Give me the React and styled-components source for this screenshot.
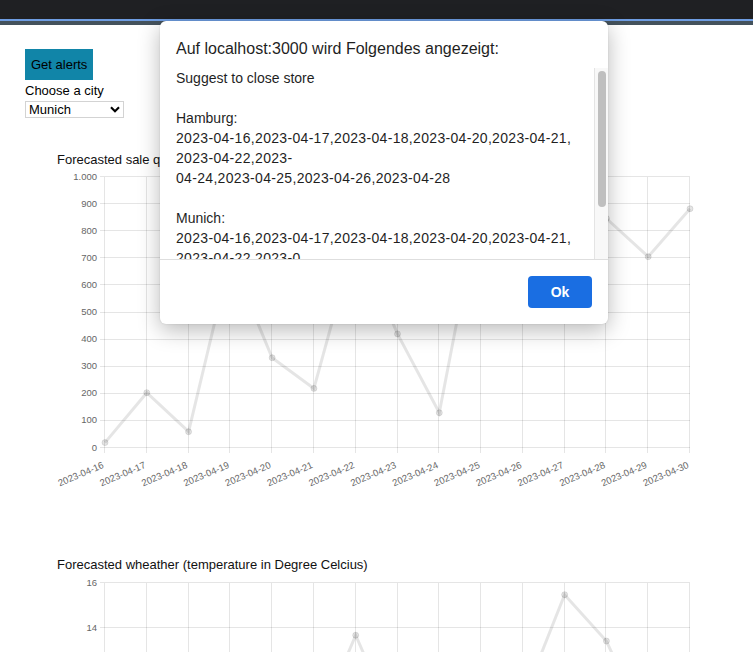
import React from "react";
import styled, { createGlobalStyle } from "styled-components";

const Global = createGlobalStyle`
  html, body {
    margin: 0;
    padding: 0;
    background: #ffffff;
    overflow: hidden;
  }
  body {
    font-family: "Liberation Sans", Arial, sans-serif;
    font-size: 13px;
    color: #000;
  }
`;

const Screen = styled.div`
  position: relative;
  width: 753px;
  height: 652px;
  overflow: hidden;
  background: #fff;
`;

const Chrome = styled.div`
  display: flex;
  flex-direction: column;
`;

const ChromeBar = styled.div`
  height: 19px;
  background: #1f2023;
`;

const ChromeAccent = styled.div`
  height: 2px;
  background: #6e9de2;
`;

const ChromeShade = styled.div`
  height: 4px;
  background: #44525c;
`;

const Page = styled.main`
  display: flex;
  flex-direction: column;
  align-items: flex-start;
  padding: 24px 25px 0;
`;

const AlertButton = styled.button`
  height: 31px;
  padding: 0 6px;
  border: none;
  border-radius: 0;
  background: #1185a8;
  color: #000;
  font-family: "Liberation Sans", Arial, sans-serif;
  font-size: 13px;
  cursor: pointer;
`;

const FieldLabel = styled.label`
  margin-top: 3px;
  font-size: 13px;
  line-height: 15px;
`;

const SelectWrap = styled.div`
  position: relative;
  margin-top: 3px;
  width: 99px;
  height: 17px;
`;

const CitySelect = styled.select`
  appearance: none;
  -webkit-appearance: none;
  width: 100%;
  height: 100%;
  box-sizing: border-box;
  margin: 0;
  padding: 0 0 0 3px;
  border: 1px solid #d3d3d3;
  border-radius: 0;
  background: #fff;
  color: #000;
  font-family: "Liberation Sans", Arial, sans-serif;
  font-size: 13px;
  line-height: 15px;
`;

const Chevron = styled.svg`
  position: absolute;
  right: 4px;
  top: 5px;
  pointer-events: none;
`;

const ChartBlock = styled.section`
  display: flex;
  flex-direction: column;
  margin-left: 32px;
  margin-top: ${(p) => p.$gap}px;
`;

const ChartTitle = styled.div`
  font-size: 13px;
  line-height: 16px;
  color: #111;
`;

const ChartSvg = styled.svg`
  display: block;
  overflow: visible;
`;

/* ---------- dialog ---------- */

const Dialog = styled.div`
  position: absolute;
  left: 160px;
  top: 21px;
  width: 448px;
  display: flex;
  flex-direction: column;
  background: #fff;
  border-radius: 6px;
  box-shadow: 0 6px 22px rgba(0, 0, 0, 0.28), 0 0 2px rgba(0, 0, 0, 0.12);
  overflow: hidden;
  font-family: "Liberation Sans", Arial, sans-serif;
  color: #1f1f1f;
`;

const DialogTitle = styled.div`
  padding: 18px 16px 0;
  font-size: 16px;
  line-height: 20px;
`;

const MessageArea = styled.div`
  display: flex;
  margin-top: 9px;
  height: 191px;
  border-bottom: 1px solid #dedede;
`;

const MessageText = styled.div`
  flex: 1;
  padding: 0 16px;
  overflow: hidden;
  font-size: 14px;
  line-height: 20px;
`;

const Line = styled.div`
  height: 20px;
  white-space: nowrap;
  letter-spacing: ${(p) => (p.$dates ? "0.32px" : "0")};
`;

const ScrollTrack = styled.div`
  width: 14px;
  flex: none;
  background: #f8f8f8;
  border-left: 1px solid #e4e4e4;
  display: flex;
  justify-content: center;
  padding-top: 3px;
  box-sizing: border-box;
`;

const ScrollThumb = styled.div`
  width: 8px;
  height: 136px;
  border-radius: 4px;
  background: #bfbfbf;
`;

const DialogFooter = styled.div`
  display: flex;
  justify-content: flex-end;
  padding: 16px;
`;

const OkButton = styled.button`
  width: 64px;
  height: 32px;
  border: none;
  border-radius: 4px;
  background: #1a6ee2;
  color: #fff;
  font-family: "Liberation Sans", Arial, sans-serif;
  font-size: 14px;
  font-weight: bold;
`;

/* ---------- chart ---------- */

const DATES = [
  "2023-04-16", "2023-04-17", "2023-04-18", "2023-04-19", "2023-04-20",
  "2023-04-21", "2023-04-22", "2023-04-23", "2023-04-24", "2023-04-25",
  "2023-04-26", "2023-04-27", "2023-04-28", "2023-04-29", "2023-04-30",
];

const SALES = [20, 204, 60, 705, 333, 220, 780, 421, 130, 930, 610, 900, 847, 706, 883];
const TEMPS = [9.2, 8.6, 10.1, 9.5, 10.4, 9.3, 13.68, 9.4, 10.0, 9.8, 10.8, 15.48, 13.42, 9.4, 10.2];

const fmt = (v) => (v >= 1000 ? `${Math.floor(v / 1000)}.${String(v % 1000).padStart(3, "0")}` : String(v));

const GRID = "rgba(0,0,0,0.1)";

function LineChart({ values, yMin, yMax, yStep, plotHeight, top }) {
  const L = 48;
  const W = 585;
  const H = plotHeight;
  const n = values.length;
  const xAt = (i) => L + (i * W) / (n - 1);
  const yAt = (v) => top + ((yMax - v) / (yMax - yMin)) * H;
  const ticks = [];
  for (let v = yMin; v <= yMax + 1e-9; v += yStep) ticks.push(v);
  const crisp = (v) => Math.round(v) + 0.5;
  const path = values.map((v, i) => `${i ? "L" : "M"}${xAt(i).toFixed(1)} ${yAt(v).toFixed(1)}`).join(" ");
  const width = L + W + 12;
  const height = top + H + 46;
  return (
    <ChartSvg width={width} height={height} viewBox={`0 0 ${width} ${height}`}>
      {ticks.map((v) => (
        <line key={`h${v}`} x1={L - 5} x2={L + W} y1={crisp(yAt(v)) - 1} y2={crisp(yAt(v)) - 1} stroke={GRID} strokeWidth="1" />
      ))}
      {values.map((_, i) => (
        <line key={`v${i}`} x1={crisp(xAt(i)) - 1} x2={crisp(xAt(i)) - 1} y1={top} y2={top + H + 5} stroke={GRID} strokeWidth="1" />
      ))}
      {ticks.map((v) => (
        <text
          key={`t${v}`}
          x={L - 8}
          y={yAt(v)}
          textAnchor="end"
          dominantBaseline="middle"
          fontSize="9.5"
          fill="#666"
          fontFamily="Liberation Sans, Arial, sans-serif"
        >
          {fmt(v)}
        </text>
      ))}
      {DATES.map((d, i) => (
        <text
          key={d}
          transform={`translate(${(xAt(i) - 0.5).toFixed(1)} ${top + H + 19.5}) rotate(-23)`}
          textAnchor="end"
          fontSize="9.5"
          fill="#666"
          fontFamily="Liberation Sans, Arial, sans-serif"
        >
          {d}
        </text>
      ))}
      <path d={path} fill="none" stroke="rgba(0,0,0,0.1)" strokeWidth="3" strokeLinejoin="miter" />
      {values.map((v, i) => (
        <circle key={`p${i}`} cx={xAt(i)} cy={yAt(v)} r="3" fill="rgba(0,0,0,0.1)" stroke="rgba(0,0,0,0.1)" strokeWidth="1" />
      ))}
    </ChartSvg>
  );
}

const MESSAGE = [
  { t: "Suggest to close store" },
  { t: "" },
  { t: "Hamburg:" },
  { t: "2023-04-16,2023-04-17,2023-04-18,2023-04-20,2023-04-21,", d: true },
  { t: "2023-04-22,2023-", d: true },
  { t: "04-24,2023-04-25,2023-04-26,2023-04-28", d: true },
  { t: "" },
  { t: "Munich:" },
  { t: "2023-04-16,2023-04-17,2023-04-18,2023-04-20,2023-04-21,", d: true },
  { t: "2023-04-22,2023-0", d: true },
  { t: "4-24,2023-04-25,2023-04-26,2023-04-28", d: true },
];

export default function App() {
  return (
    <Screen>
      <Global />
      <Chrome>
        <ChromeBar />
        <ChromeAccent />
        <ChromeShade />
      </Chrome>
      <Page>
        <AlertButton>Get alerts</AlertButton>
        <FieldLabel htmlFor="city">Choose a city</FieldLabel>
        <SelectWrap>
          <CitySelect id="city" defaultValue="Munich">
            <option>Munich</option>
            <option>Hamburg</option>
          </CitySelect>
          <Chevron width="10" height="7" viewBox="0 0 10 7">
            <polyline points="1,1.2 5,5.2 9,1.2" fill="none" stroke="#000" strokeWidth="2.1" />
          </Chevron>
        </SelectWrap>

        <ChartBlock $gap={34}>
          <ChartTitle>Forecasted sale quantity</ChartTitle>
          <LineChart values={SALES} yMin={0} yMax={1000} yStep={100} plotHeight={271} top={9} />
        </ChartBlock>

        <ChartBlock $gap={63}>
          <ChartTitle>Forecasted wheather (temperature in Degree Celcius)</ChartTitle>
          <LineChart values={TEMPS} yMin={6} yMax={16} yStep={2} plotHeight={225} top={10} />
        </ChartBlock>
      </Page>

      <Dialog role="alertdialog">
        <DialogTitle>Auf localhost:3000 wird Folgendes angezeigt:</DialogTitle>
        <MessageArea>
          <MessageText>
            {MESSAGE.map((l, i) => (
              <Line key={i} $dates={l.d}>
                {l.t || "\u00a0"}
              </Line>
            ))}
          </MessageText>
          <ScrollTrack>
            <ScrollThumb />
          </ScrollTrack>
        </MessageArea>
        <DialogFooter>
          <OkButton>Ok</OkButton>
        </DialogFooter>
      </Dialog>
    </Screen>
  );
}
